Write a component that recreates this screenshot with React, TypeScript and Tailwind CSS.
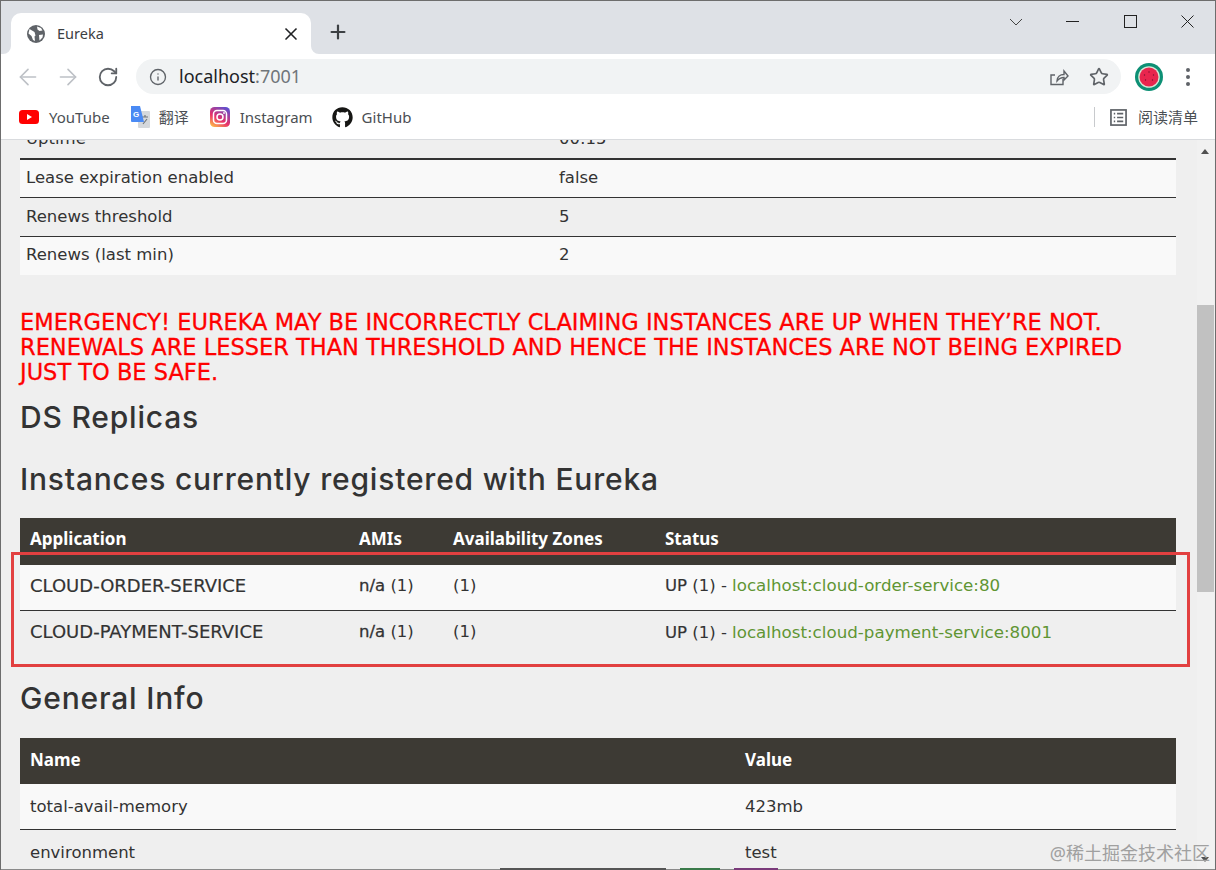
import { ArrowLeft, ArrowRight, Info, Plus, RotateCw, Star, X } from "lucide-react";
import { FaGithub } from "react-icons/fa";

const shots = [
  { name: "YouTube", icon: "yt", gap: "mr-[20px]" },
  { name: "翻译", icon: "tr", gap: "mr-[21px]" },
  { name: "Instagram", icon: "ig", gap: "mr-[20px]" },
  { name: "GitHub", icon: "gh", gap: "mr-[20px]" },
];

const Globe = () => (
  <svg width="18" height="18" viewBox="0 0 18 18" className="shrink-0">
    <circle cx="9" cy="9" r="9" fill="#5f6368" />
    <path d="M2.500 4 7.500 7l1 3.500-1 1 .5 4.500-2-1-1.500-4L1.500 8.500Z M10 1.500l4 1.500 1.500 2.500-3 .5-2-1.500Z M12 10l4-.5-.5 3-3 3Z" fill="#fff" />
  </svg>
);

const BookmarkIcon = ({ kind }: { kind: string }) => {
  if (kind === "yt") {
    return (
      <svg width="20" height="14" viewBox="0 0 20 14" className="shrink-0">
        <rect width="20" height="14" rx="3.500" fill="#f00" />
        <path d="M8 4v6l5-3Z" fill="#fff" />
      </svg>
    );
  }
  if (kind === "tr") {
    return (
      <svg width="20" height="22" viewBox="0 0 20 22" className="-mr-px shrink-0">
        <rect x="8" y="5" width="12" height="17" rx="1" fill="#d5d8dc" />
        <path d="M12 11h6M15 9v2M13 18l4-5" stroke="#70757a" strokeWidth="1.200" fill="none" />
        <path d="M1 0h9l4 16H2a1 1 0 0 1-1-1Z" fill="#4a8af4" />
        <text x="3" y="11" fontSize="8" fontWeight="700" fill="#fff" fontFamily="'Liberation Sans', sans-serif">G</text>
      </svg>
    );
  }
  if (kind === "ig") {
    return (
      <svg width="20" height="20" viewBox="0 0 20 20" className="shrink-0">
        <defs>
          <linearGradient id="ig" x1="0.200" y1="1" x2="0.800" y2="0">
            <stop offset="0" stopColor="#fdb44b" />
            <stop offset="0.400" stopColor="#e8306a" />
            <stop offset="1" stopColor="#5b4fd0" />
          </linearGradient>
        </defs>
        <rect width="20" height="20" rx="4.500" fill="url(#ig)" />
        <rect x="3.500" y="3.500" width="13" height="13" rx="3.500" fill="none" stroke="#fff" strokeWidth="1.500" />
        <circle cx="10" cy="10" r="3" fill="none" stroke="#fff" strokeWidth="1.500" />
        <circle cx="14" cy="6" r="0.900" fill="#fff" />
      </svg>
    );
  }
  return <FaGithub className="-mx-px shrink-0 text-[21px] text-[#161614]" />;
};

const Toolbar = () => (
  <div className="flex h-[41px] items-center bg-white pl-[14px] pt-[4px]">
    <ArrowLeft className="h-[26px] w-[26px] text-[#bdc1c6]" strokeWidth={1.500} />
    <ArrowRight className="ml-[14px] h-[26px] w-[26px] text-[#bdc1c6]" strokeWidth={1.500} />
    <RotateCw className="ml-[16px] h-[22px] w-[22px] text-[#5f6368]" strokeWidth={2} />
    <div className="ml-[17px] flex h-[35px] w-[985px] items-center rounded-full bg-[#f1f3f4] pl-[13px]">
      <Info className="h-[18px] w-[18px] text-[#5f6368]" strokeWidth={1.800} />
      <span className="ml-[12px] text-[18px] text-[#202124]">
        localhost<span className="text-[#70757a]">:7001</span>
      </span>
      <svg width="20" height="20" viewBox="0 0 20 20" fill="none" stroke="#5f6368" strokeWidth="1.400" className="ml-auto">
        <path d="M14 12v5.500H2V8h4" />
        <path d="M8 14c0-4 3-6.500 7-6.500V4l4 5-4 4V10.500c-3 0-5 1-7 3.500Z" />
      </svg>
      <Star className="ml-[20px] mr-[12px] h-[20px] w-[20px] text-[#5f6368]" strokeWidth={2} />
    </div>
    <svg width="30" height="30" viewBox="0 0 30 30" className="ml-[13px] shrink-0">
      <circle cx="15" cy="15" r="14" fill="#0d9075" />
      <circle cx="15" cy="15" r="10.800" fill="#d6ead8" />
      <circle cx="15" cy="15" r="9.500" fill="#e8264e" />
      <g fill="#7a1030">
        <circle cx="15" cy="10" r="0.700" />
        <circle cx="10.500" cy="13" r="0.700" />
        <circle cx="19.500" cy="13" r="0.700" />
        <circle cx="11.500" cy="18" r="0.700" />
        <circle cx="18.500" cy="18" r="0.700" />
      </g>
    </svg>
    <div className="ml-[22px] flex flex-col gap-[3px]">
      <span className="h-[4px] w-[4px] rounded-full bg-[#5f6368]" />
      <span className="h-[4px] w-[4px] rounded-full bg-[#5f6368]" />
      <span className="h-[4px] w-[4px] rounded-full bg-[#5f6368]" />
    </div>
  </div>
);

const Bookmarks = () => (
  <div className="flex h-[45px] items-center border-b border-[#d9dbde] bg-white pl-[18px] text-[15px] text-[#4b4f54]">
    {shots.map((s) => (
      <div key={s.name} className={`${s.gap} flex items-center gap-[10px]`}>
        <BookmarkIcon kind={s.icon} />
        <span>{s.name}</span>
      </div>
    ))}
    <div className="ml-auto flex items-center pr-[17px]">
      <div className="mr-[15px] h-[20px] w-px bg-[#c8cacd]" />
      <svg width="17" height="17" viewBox="0 0 18 18" fill="none" stroke="#5f6368" strokeWidth="1.800">
        <rect x="1" y="1" width="16" height="16" />
        <path d="M4 5h1.500M7.500 5H14M4 9h1.500M7.500 9H14M4 13h1.500M7.500 13H14" />
      </svg>
      <span className="ml-[11px] text-[15px]">阅读清单</span>
    </div>
  </div>
);

const Row = ({ a, b, odd, tall }: { a: string; b: string; odd?: boolean; tall?: boolean }) => (
  <div className={`flex items-center border-b border-[#333] pl-[6px] pr-[7px] ${tall ? "h-[39px] pb-[1px]" : "h-[38px] pb-[2px]"} ${odd ? "bg-[#f9f9f9]" : ""}`}>
    <div className="w-[533px]">{a}</div>
    <div>{b}</div>
  </div>
);

export default function App() {
  return (
    <div className="relative flex h-[870px] w-[1216px] flex-col overflow-hidden border-x border-t border-[#6d6d6d] bg-[#efefef] font-['Noto_Sans','Noto_Sans_CJK_SC',sans-serif] text-[#333]">
      {/* tab strip */}
      <div className="flex h-[53px] shrink-0 items-end bg-[#dee1e6] pl-[10px]">
        <div className="relative flex h-[41px] w-[300px] items-center rounded-t-[10px] bg-white pl-[16px] pr-[10px] text-[14.500px] text-[#3c4043]">
          <svg width="8" height="8" viewBox="0 0 8 8" className="absolute bottom-0 left-[-8px]">
            <path d="M8 0v8H0a8 8 0 0 0 8-8Z" fill="#fff" />
          </svg>
          <svg width="8" height="8" viewBox="0 0 8 8" className="absolute bottom-0 right-[-8px]">
            <path d="M0 0v8h8a8 8 0 0 1-8-8Z" fill="#fff" />
          </svg>
          <Globe />
          <span className="ml-[12px]">Eureka</span>
          <X className="ml-auto h-[20px] w-[20px] text-[#202124]" strokeWidth={2} />
        </div>
        <Plus className="mb-[11px] ml-[16px] h-[22px] w-[22px] text-[#3c4043]" strokeWidth={2.400} />
        <div className="mb-[26px] ml-auto flex items-center pr-[21px]">
          <svg width="14" height="8" viewBox="0 0 14 8" fill="none" stroke="#444" className="mr-[43px]">
            <path d="M1 1l6 6 6-6" />
          </svg>
          <div className="mr-[45px] h-px w-[13px] bg-[#222]" />
          <div className="mr-[44px] h-[13px] w-[13px] border border-[#222]" />
          <svg width="13" height="13" viewBox="0 0 13 13" stroke="#222" fill="none">
            <path d="M.5.500l12 12M12.500.500l-12 12" />
          </svg>
        </div>
      </div>
      <Toolbar />
      <Bookmarks />

      {/* page */}
      <div className="flex min-h-0 flex-1 overflow-hidden">
        <div className="min-w-0 flex-1 pl-[19px] pr-[21px] font-['DejaVu_Sans','Noto_Sans',sans-serif] text-[16.500px] leading-[24px]">
          <div className="-mt-[20px]">
            <div className="flex h-[40px] items-center border-b-2 border-[#333] pl-[6px] pr-[7px]">
              <div className="w-[533px]">Uptime</div>
              <div>00:15</div>
            </div>
            <Row a="Lease expiration enabled" b="false" odd />
            <Row a="Renews threshold" b="5" tall />
            <div className="flex h-[38px] items-center bg-[#f9f9f9] pb-[3px] pl-[6px] pr-[7px]">
              <div className="w-[533px]">Renews (last min)</div>
              <div>2</div>
            </div>
          </div>

          <h4 className="mt-[35px] text-[22.500px] leading-[25px] text-[#ff0000] [-webkit-text-stroke:0.3px_#ff0000]">
            EMERGENCY! EUREKA MAY BE INCORRECTLY CLAIMING INSTANCES ARE UP WHEN THEY’RE NOT.
            <br />
            RENEWALS ARE LESSER THAN THRESHOLD AND HENCE THE INSTANCES ARE NOT BEING EXPIRED
            <br />
            JUST TO BE SAFE.
          </h4>
          <h2 className="mt-[14px] font-['Inter',sans-serif] text-[30px] font-medium leading-[36px] tracking-[0.8px]">DS Replicas</h2>
          <h2 className="mt-[26px] font-['Inter',sans-serif] text-[30px] font-medium leading-[36px] tracking-[0.8px]">Instances currently registered with Eureka</h2>

          <div className="mt-[21px] flex h-[47px] items-center bg-[#3d3a34] px-[10px] pb-[5px] font-['Noto_Sans',sans-serif] text-[17px] font-bold text-white">
            <div className="w-[329px]">Application</div>
            <div className="w-[94px]">AMIs</div>
            <div className="w-[212px]">Availability Zones</div>
            <div>Status</div>
          </div>
          {[
            { app: "CLOUD-ORDER-SERVICE", inst: "localhost:cloud-order-service:80", bg: "bg-[#f9f9f9] border-b border-[#333]" },
            { app: "CLOUD-PAYMENT-SERVICE", inst: "localhost:cloud-payment-service:8001", bg: "" },
          ].map((r) => (
            <div key={r.app} className={`flex h-[46px] items-center px-[10px] pb-[4px] ${r.bg}`}>
              <div className="w-[329px] text-[18px] [-webkit-text-stroke:0.2px_#333]">{r.app}</div>
              <div className="w-[94px]">
                <b className="font-normal [-webkit-text-stroke:0.3px_#333]">n/a</b> (1)
              </div>
              <div className="w-[212px]">(1)</div>
              <div>
                <span className="[-webkit-text-stroke:0.2px_#333]">UP</span> (1) - <span className="text-[16.700px] text-[#5f9533]">{r.inst}</span>
              </div>
            </div>
          ))}

          <h2 className="mt-[23px] font-['Inter',sans-serif] text-[30px] font-medium leading-[36px] tracking-[0.8px]">General Info</h2>
          <div className="mt-[22px] flex h-[46px] items-center bg-[#3d3a34] px-[10px] pb-[3px] font-['Noto_Sans',sans-serif] text-[17px] font-bold text-white">
            <div className="w-[715px]">Name</div>
            <div>Value</div>
          </div>
          <div className="flex h-[46px] items-center border-b border-[#333] bg-[#f9f9f9] px-[10px]">
            <div className="w-[715px]">total-avail-memory</div>
            <div>423mb</div>
          </div>
          <div className="flex h-[46px] items-center px-[10px]">
            <div className="w-[715px]">environment</div>
            <div>test</div>
          </div>
        </div>

        {/* scrollbar */}
        <div className="relative mr-px w-[17px] shrink-0 bg-[#f1f1f1]">
          <div className="absolute left-[4px] top-[9px] h-0 w-0 border-x-[4.500px] border-b-[5px] border-x-transparent border-b-[#505050]" />
          <div className="absolute left-0 right-0 top-[165px] h-[287px] bg-[#c1c1c1]" />
          <div className="absolute bottom-[8px] left-[4px] h-0 w-0 border-x-[4.500px] border-t-[5px] border-x-transparent border-t-[#505050]" />
        </div>
      </div>

      {/* annotation + watermark over the shot */}
      <div className="pointer-events-none absolute left-[10px] top-[551px] h-[115px] w-[1179px] border-[3px] border-[#e24040]" />
      <div className="absolute bottom-[3px] right-[5px] text-[18px] text-[#a0a0a0]">@稀土掘金技术社区</div>
      <div className="absolute bottom-0 left-0 h-px w-full bg-[#8a8a8a]" />
      <div className="absolute bottom-0 left-[499px] flex h-[2px] gap-[14px]">
        <span className="w-[166px] bg-[#555]" />
        <span className="w-[40px] bg-[#3a7a4a]" />
        <span className="w-[44px] bg-[#7a3a7a]" />
      </div>
    </div>
  );
}
